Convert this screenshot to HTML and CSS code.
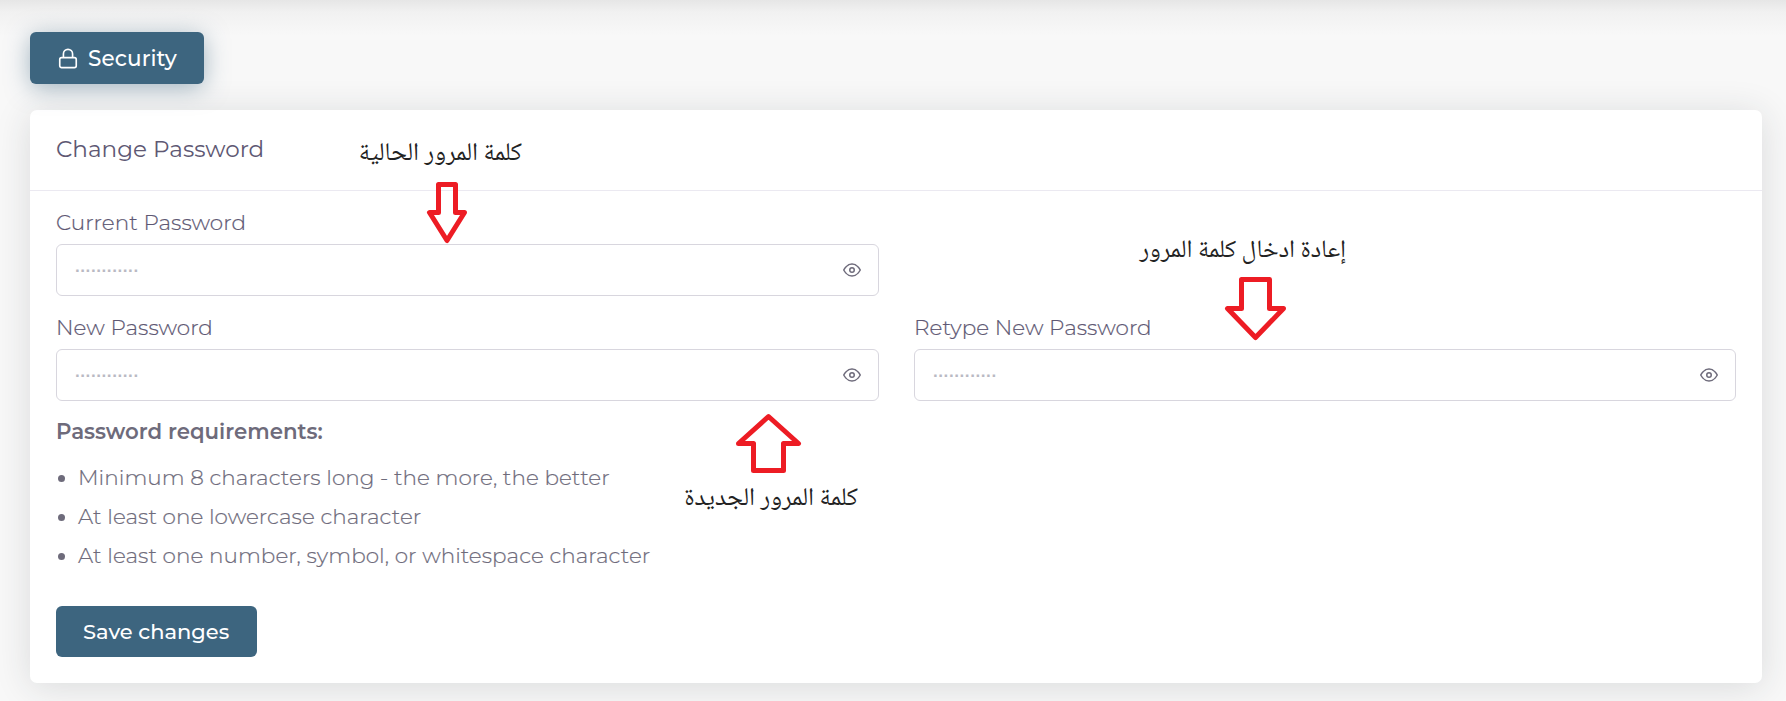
FILE: index.html
```html
<!DOCTYPE html>
<html lang="en">
<head>
<meta charset="utf-8">
<title>Security</title>
<link rel="stylesheet" href="styles.css">
</head>
<body>
<svg class="sprite" aria-hidden="true">
  <symbol id="eye" viewBox="0 0 24 24"><path d="M1 12s4-8 11-8 11 8 11 8-4 8-11 8S1 12 1 12z"/><circle cx="12" cy="12" r="3"/></symbol>
</svg>
<main class="page">
  <nav class="tabs">
    <a class="btn tab">
      <svg class="lock" viewBox="0 0 24 24"><rect x="3" y="11" width="18" height="11" rx="2"/><path d="M7 11V7a5 5 0 0 1 10 0v4"/></svg>
      <span class="tab-text">Security</span>
    </a>
  </nav>
  <section class="card">
    <header class="card-header"><h4 class="title">Change Password</h4></header>
    <form class="card-body">
      <div class="grid">
        <div class="field field-first">
          <label class="label">Current Password</label>
          <div class="input"><span class="dots">············</span><svg class="eye"><use href="#eye"/></svg></div>
        </div>
        <div class="field">
          <label class="label">New Password</label>
          <div class="input"><span class="dots">············</span><svg class="eye"><use href="#eye"/></svg></div>
        </div>
        <div class="field">
          <label class="label">Retype New Password</label>
          <div class="input"><span class="dots">············</span><svg class="eye"><use href="#eye"/></svg></div>
        </div>
      </div>
      <p class="req-title"><span>Password requirements:</span></p>
      <ul class="req">
        <li class="item">Minimum 8 characters long - the more, the better</li>
        <li class="item">At least one lowercase character</li>
        <li class="item">At least one number, symbol, or whitespace character</li>
      </ul>
      <button class="btn save" type="button">Save changes</button>
    </form>
  </section>
</main>
<div class="notes">
  <span class="note note-current" lang="ar" dir="rtl">كلمة المرور الحالية</span>
  <span class="note note-retype" lang="ar" dir="rtl">إعادة ادخال كلمة المرور</span>
  <span class="note note-new" lang="ar" dir="rtl">كلمة المرور الجديدة</span>
  <svg class="arrows" viewBox="0 0 1786 701">
    <path d="M438.500 184.500H455.500V212.500H464.500L447 240.500L429.500 212.500H438.500Z"/>
    <path d="M1241.500 279.500H1269.500V308.500H1283.500L1255.500 337.500L1227.500 308.500H1241.500Z"/>
    <path d="M768.500 416.500L798.500 443.500H783.500V470.500H753.500V443.500H738.500Z"/>
  </svg>
</div>
</body>
</html>
```
FILE: styles.css
```css
* { box-sizing: border-box; }
body {
  margin: 0;
  height: 701px;
  overflow: hidden;
  position: relative;
  background: #f8f8f8;
  font: 300 21.500px/30px Montserrat, Inter, sans-serif;
  color: #6e6b7b;
}
.sprite { display: none; }
.page {
  height: 701px;
  padding: 32px 24px 18px 30px;
  background: linear-gradient(#e6e6e6, #f1f1f1 12px, #f8f8f8 36px);
}
.tabs { display: flex; margin-bottom: 26px; }
.btn {
  display: flex;
  align-items: center;
  border: 0;
  border-radius: 6px;
  background: #3d657f;
  color: #fff;
  font: 500 21px/30px Montserrat, Inter, sans-serif;
  white-space: nowrap;
}
.tab { width: 174px; height: 52px; padding-left: 27px; gap: 9px; font-size: 21.500px; letter-spacing: .1px; box-shadow: 0 4px 24px -1px rgba(61, 101, 127, .5); }
.tab-text { padding-bottom: 1px; }
.lock { width: 22px; height: 23px; fill: none; stroke: #fff; stroke-width: 1.800; }
.card { height: 573px; background: #fff; border-radius: 7px; box-shadow: 0 4px 36px rgba(34, 41, 47, .14); }
.card-header { height: 81px; padding: 23px 26px; border-bottom: 1px solid #ebe9f1; }
.title { margin: 0; color: #5e5873; font-weight: 400; font-size: 23.100px; line-height: 32px; white-space: nowrap; }
.card-body { padding: 17px 26px 0; }
.grid { display: grid; grid-template-columns: 823px 822px; column-gap: 35px; row-gap: 17px; }
.field-first { grid-column: 1 / 3; width: 823px; }
.label { display: block; height: 36px; line-height: 28px; color: #5e5873; white-space: nowrap; }
.label, .item { letter-spacing: .05px; -webkit-text-stroke: .2px currentColor; }
.input { display: flex; align-items: center; justify-content: space-between; height: 52px; padding: 0 17px 0 18px; border: 1px solid #d8d6de; border-radius: 6px; }
.dots { color: #b9b9c3; font: 700 17px/20px "Liberation Sans", sans-serif; letter-spacing: -.350px; padding-top: 2px; }
.eye { width: 18px; height: 18px; fill: none; stroke: #6e6b7b; stroke-width: 2; }
.req-title { margin: 14px 0 0; font-size: 21.300px; line-height: 32px; font-weight: 600; white-space: nowrap; }
.req { margin: 11px 0 0; padding: 0 0 0 22px; list-style: none; }
.item { height: 39px; line-height: 39px; white-space: nowrap; position: relative; }
.item::before { content: ""; position: absolute; left: -20px; top: 17px; width: 7px; height: 7px; border-radius: 50%; background: #6e6b7b; }
.save { width: 201px; height: 51px; margin-top: 31px; padding: 0 0 0 27px; }
.notes { position: absolute; inset: 0; }
.note { position: absolute; color: #222; font: 400 25.200px/30px "Noto Naskh Arabic", "Noto Sans Arabic", "DejaVu Sans", sans-serif; white-space: nowrap; }
.note-current { right: 1264px; top: 140px; }
.note-retype { right: 440px; top: 237px; font-size: 25px; }
.note-new { right: 928px; top: 485px; }
.arrows { position: absolute; inset: 0; width: 1786px; height: 701px; fill: none; stroke: #ed1c24; stroke-width: 5; stroke-linejoin: round; }
```
